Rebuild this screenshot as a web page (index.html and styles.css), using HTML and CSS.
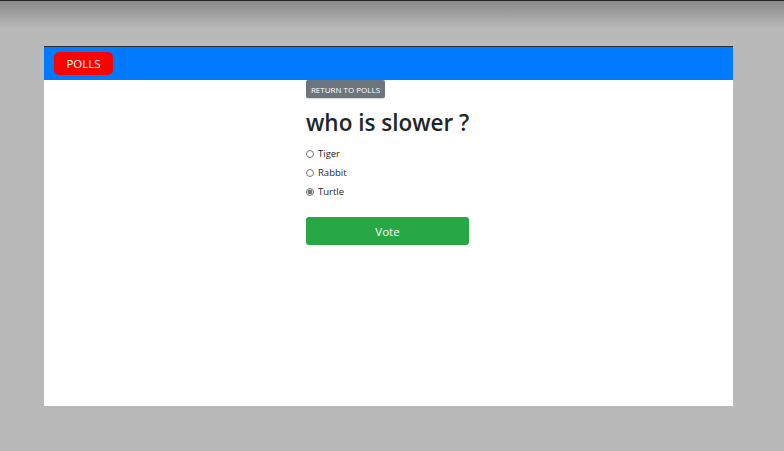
FILE: index.html
```html
<!DOCTYPE html>
<html>
<head>
<meta charset="utf-8">
<link rel="stylesheet" href="styles.css">
</head>
<body>
<div class="window">
  <nav class="navbar">
    <a class="polls-btn">POLLS</a>
  </nav>
  <main class="content">
    <div class="poll">
      <a class="return-btn">RETURN TO POLLS</a>
      <h2 class="question">who is slower ?</h2>
      <form class="options">
        <label class="option"><input type="radio" name="a"><span>Tiger</span></label>
        <label class="option"><input type="radio" name="a"><span>Rabbit</span></label>
        <label class="option"><input type="radio" name="a" checked><span>Turtle</span></label>
        <button type="button" class="vote-btn">Vote</button>
      </form>
    </div>
  </main>
</div>
</body>
</html>
```

FILE: styles.css
```css
html, body {
  margin: 0;
  height: 100%;
}
body {
  background: linear-gradient(#252525 0, #252525 1px, #8a8a8a 1px, #b9b9b9 29px, #b9b9b9 100%);
  font-family: "Open Sans", "Noto Sans", sans-serif;
  padding-top: 46px;
  box-sizing: border-box;
}
.window {
  margin-left: 44px;
  width: 689px;
  height: 360px;
  background: #fff;
  border-top: 1px solid #2d3135;
  box-sizing: border-box;
}
.navbar {
  height: 33px;
  background: #007bff;
  padding: 5px 10px;
  box-sizing: border-box;
  display: flex;
  align-items: flex-start;
}
.polls-btn {
  display: flex;
  align-items: center;
  justify-content: center;
  width: 59px;
  height: 23px;
  background: #ff0000;
  color: #fff;
  border-radius: 5px;
  font-size: 11.5px;
}
.content {
  display: flex;
  padding-left: 262px;
}
.poll {
  width: 163px;
  display: flex;
  flex-direction: column;
  align-items: flex-start;
}
.return-btn {
  display: flex;
  align-items: center;
  justify-content: center;
  width: 79px;
  height: 18px;
  background: #6c757d;
  color: #fff;
  font-size: 8px;
  border-radius: 2px;
  box-shadow: 0 1px 1px rgba(0,0,0,0.15);
}
.question {
  margin: 10px 0 0;
  font-size: 22.5px;
  font-weight: 600;
  color: #212529;
  line-height: 29px;
  white-space: nowrap;
}
.options {
  margin-top: 7px;
  display: flex;
  flex-direction: column;
  width: 100%;
}
.option {
  display: flex;
  align-items: center;
  height: 19px;
  font-size: 9.5px;
  color: #212529;
}
.option input {
  margin: 0 4px 0 0;
  width: 8px;
  height: 8px;
  accent-color: #777;
}
.vote-btn {
  margin-top: 16px;
  width: 163px;
  height: 28px;
  background: #28a745;
  border: none;
  color: #fff;
  font-family: inherit;
  font-size: 11.5px;
  border-radius: 3px;
  padding: 0;
}
```
